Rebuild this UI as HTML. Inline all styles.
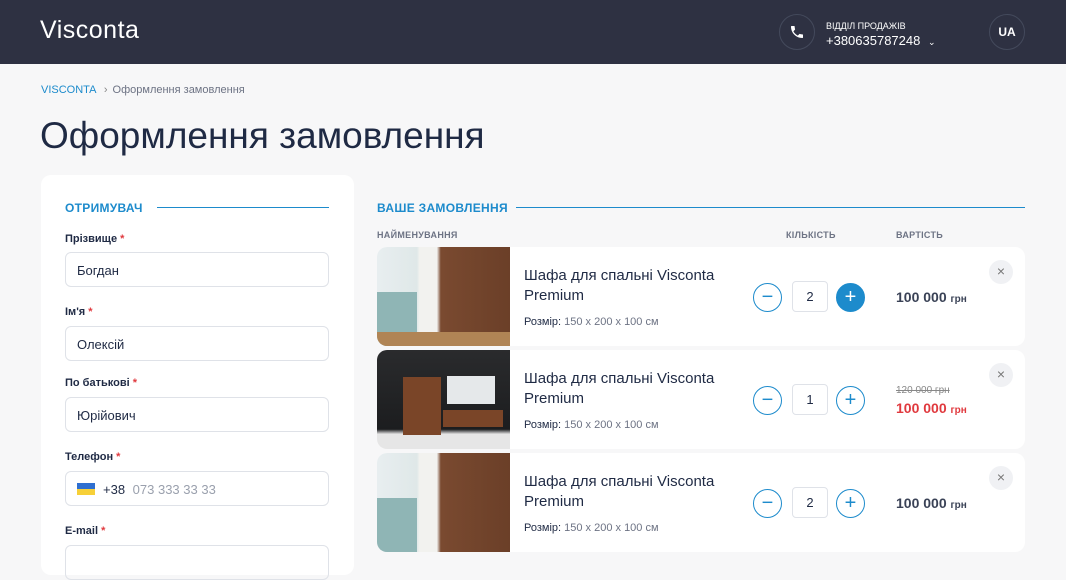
<!DOCTYPE html>
<html><head><meta charset="utf-8"><style>
*{box-sizing:border-box;margin:0;padding:0}
body{width:1066px;height:552px;overflow:hidden;background:#f7f7f8;font-family:"Liberation Sans",sans-serif;color:#1f2a44;position:relative}
.hdr{position:absolute;left:0;top:0;width:1066px;height:64px;background:#2e3142}
.logo{position:absolute;left:40px;top:16px;color:#fff;font-size:25px;font-weight:300;letter-spacing:.5px}
.circ{position:absolute;width:36px;height:36px;border-radius:50%;border:1px solid #444a5c;color:#fff;display:flex;align-items:center;justify-content:center}
.abs{position:absolute}
.card{position:absolute;background:#fff;border-radius:10px}
.lbl{position:absolute;left:65px;font-size:11px;font-weight:bold;color:#1f2a44}
.lbl b{color:#e0393e}
.inp{position:absolute;left:65px;width:264px;height:35px;border:1px solid #dfe2e8;border-radius:6px;font-size:13px;padding:10px 11px;color:#1f2a44}
.sec{position:absolute;font-size:12px;font-weight:bold;color:#1d8bcc;letter-spacing:.3px}
.line{position:absolute;height:1px;background:#1d8bcc}
.th{position:absolute;top:230px;font-size:9px;font-weight:bold;color:#6d7384;letter-spacing:.3px}
.row{position:absolute;left:377px;width:648px;height:99px;background:#fff;border-radius:10px;overflow:hidden}
.img{position:absolute;left:0;top:0;width:133px;height:99px}
.t{position:absolute;left:147px;top:19px;font-size:15px;line-height:20px;color:#1f2a44}
.sz{position:absolute;left:147px;top:69px;font-size:11px;color:#6d7384}
.sz span{color:#1f2a44}
.btn{position:absolute;top:36px;width:29px;height:29px;border-radius:50%;border:1px solid #1d8bcc;color:#1d8bcc;font-size:20px;line-height:26px;text-align:center}
.q{position:absolute;left:415px;top:34px;width:36px;height:31px;border:1px solid #dfe2e8;border-radius:4px;font-size:13px;text-align:center;line-height:29px}
.pr{position:absolute;left:519px;font-size:14px;font-weight:bold;color:#3a4256}
.pr small{font-size:10px}
.x{position:absolute;left:612px;top:13px;width:24px;height:24px;border-radius:50%;background:#f0f1f4;color:#777;text-align:center;line-height:23px;font-size:14px}
</style></head><body>
<div class="hdr">
<div class="logo">Visconta</div>
<div class="circ" style="left:779px;top:14px"><svg width="16" height="16" viewBox="0 0 24 24"><path fill="#fff" d="M6.6 10.8c1.4 2.8 3.8 5.1 6.6 6.6l2.2-2.2c.3-.3.7-.4 1-.2 1.1.4 2.3.6 3.6.6.6 0 1 .4 1 1V20c0 .6-.4 1-1 1C10.6 21 3 13.4 3 4c0-.6.4-1 1-1h3.5c.6 0 1 .4 1 1 0 1.3.2 2.5.6 3.6.1.3 0 .7-.2 1z"/></svg></div>
<div class="abs" style="left:826px;top:21px;color:#fff;font-size:9px">ВІДДІЛ ПРОДАЖІВ</div>
<div class="abs" style="left:826px;top:33px;color:#fff;font-size:13px">+380635787248 <span style="font-size:9px;margin-left:4px">&#8964;</span></div>
<div class="circ" style="left:989px;top:14px;font-size:12px;font-weight:bold">UA</div>
</div>
<div class="abs" style="left:41px;top:84px;font-size:11px;color:#1d8bcc">VISCONTA <span style="color:#888;margin:0 5px">›</span><span style="color:#6d7384">Оформлення замовлення</span></div>
<div class="abs" style="left:40px;top:115px;font-size:37px;color:#1f2a44">Оформлення замовлення</div>
<div class="card" style="left:41px;top:175px;width:313px;height:400px"></div>
<div class="sec" style="left:65px;top:201px">ОТРИМУВАЧ</div><div class="line" style="left:157px;top:207px;width:172px"></div>
<div class="lbl" style="top:233px">Прізвище <b>*</b></div><div class="inp" style="top:252px">Богдан</div>
<div class="lbl" style="top:306px">Ім'я <b>*</b></div><div class="inp" style="top:326px">Олексій</div>
<div class="lbl" style="top:377px">По батькові <b>*</b></div><div class="inp" style="top:397px">Юрійович</div>
<div class="lbl" style="top:451px">Телефон <b>*</b></div>
<div class="inp" style="top:471px"><span style="display:inline-block;width:18px;height:12px;vertical-align:-1px;background:linear-gradient(#2f6fd0 50%,#f7d038 50%);margin-right:8px"></span>+38 <span style="color:#9aa0ad;margin-left:4px">073 333 33 33</span></div>
<div class="lbl" style="top:525px">E-mail <b>*</b></div><div class="inp" style="top:545px"></div>
<div class="sec" style="left:377px;top:201px">ВАШЕ ЗАМОВЛЕННЯ</div><div class="line" style="left:516px;top:207px;width:509px"></div>
<div class="th" style="left:377px">НАЙМЕНУВАННЯ</div><div class="th" style="left:786px">КІЛЬКІСТЬ</div><div class="th" style="left:896px">ВАРТІСТЬ</div>

<div class="row" style="top:247px"><div class="img" style="background:linear-gradient(90deg,#e8eef0 0,#dfe8e8 30%,#f2f2ef 32%,#f2f2ef 45%,#7a4a30 48%,#6b3f28 100%)"><div class="abs" style="left:0;top:45px;width:40px;height:54px;background:#8fb5b5"></div><div class="abs" style="left:0;top:85px;width:133px;height:14px;background:#b08455"></div></div>
<div class="t">Шафа для спальні Visconta<br>Premium</div><div class="sz"><span>Розмір:</span> 150 х 200 х 100 см</div>
<div class="btn" style="left:376px">−</div><div class="q">2</div><div class="btn" style="left:459px;background:#1d8bcc;color:#fff">+</div>
<div class="pr" style="top:42px">100 000 <small>грн</small></div><div class="x">×</div></div>

<div class="row" style="top:350px"><div class="img" style="background:linear-gradient(#2a2b2d,#1c1d1f 80%,#e6e6e6 85%)"><div class="abs" style="left:26px;top:27px;width:38px;height:58px;background:#7a4528"></div><div class="abs" style="left:70px;top:26px;width:48px;height:28px;background:#e5e8ea"></div><div class="abs" style="left:66px;top:60px;width:60px;height:17px;background:#7a4528"></div></div>
<div class="t">Шафа для спальні Visconta<br>Premium</div><div class="sz"><span>Розмір:</span> 150 х 200 х 100 см</div>
<div class="btn" style="left:376px">−</div><div class="q">1</div><div class="btn" style="left:459px">+</div>
<div class="pr" style="top:35px;font-size:10px;font-weight:normal;color:#888;text-decoration:line-through">120 000 грн</div>
<div class="pr" style="top:50px;color:#e0393e">100 000 <small>грн</small></div><div class="x">×</div></div>

<div class="row" style="top:453px"><div class="img" style="background:linear-gradient(90deg,#e8eef0 0,#dfe8e8 30%,#f2f2ef 32%,#f2f2ef 45%,#7a4a30 48%,#6b3f28 100%)"><div class="abs" style="left:0;top:45px;width:40px;height:54px;background:#8fb5b5"></div></div>
<div class="t">Шафа для спальні Visconta<br>Premium</div><div class="sz"><span>Розмір:</span> 150 х 200 х 100 см</div>
<div class="btn" style="left:376px">−</div><div class="q">2</div><div class="btn" style="left:459px">+</div>
<div class="pr" style="top:42px">100 000 <small>грн</small></div><div class="x">×</div></div>
</body></html>
